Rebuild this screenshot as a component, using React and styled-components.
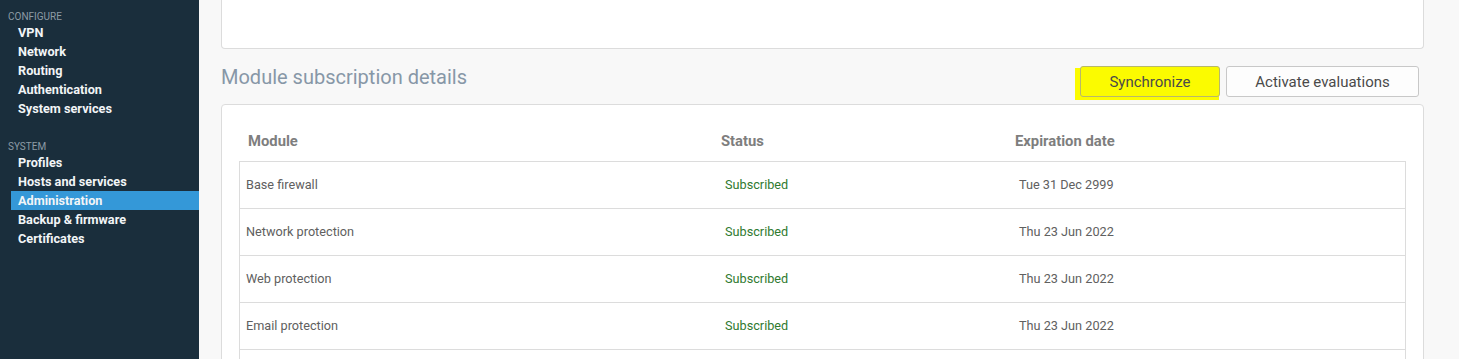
import React from "react";
import styled, { createGlobalStyle } from "styled-components";

const GlobalStyle = createGlobalStyle`
  html, body {
    margin: 0;
    padding: 0;
    height: 359px;
    overflow: hidden;
    background: #f8f8f8;
    font-family: Roboto, "Liberation Sans", Arial, sans-serif;
  }
  * { box-sizing: border-box; }
`;

const Layout = styled.div`
  display: flex;
  height: 359px;
  overflow: hidden;
`;

const Sidebar = styled.nav`
  width: 199px;
  flex-shrink: 0;
  background: #1a2e3c;
  padding-top: 11px;
`;

const SectionLabel = styled.div`
  font-size: 10px;
  line-height: 12px;
  color: #8d9ba5;
  text-transform: uppercase;
  padding-left: 8px;
  margin-top: ${(p) => (p.$first ? "0" : "23px")};
`;

const NavItem = styled.div`
  margin-left: 11px;
  padding-left: 7px;
  height: 19px;
  line-height: 19px;
  font-size: 12.7px;
  font-weight: 700;
  color: #f2f5f7;
  background: ${(p) => (p.$active ? "#3498d8" : "transparent")};
`;

const Main = styled.main`
  flex: 1;
  padding: 0 35px 0 22px;
  background: #f8f8f8;
`;

const TopPanel = styled.div`
  height: 49px;
  background: #fff;
  border: 1px solid #dcdcdc;
  border-top: none;
  border-radius: 0 0 4px 4px;
`;

const SectionHeader = styled.div`
  display: flex;
  align-items: flex-start;
  justify-content: space-between;
  height: 55px;
  padding-top: 17px;
`;

const Title = styled.h2`
  margin: 0;
  font-size: 20px;
  line-height: 22px;
  font-weight: 400;
  color: #8797a7;
`;

const Actions = styled.div`
  display: flex;
  gap: 6px;
  margin-right: 5px;
`;

const Highlight = styled.span`
  position: relative;
  display: inline-flex;
  &::before {
    content: "";
    position: absolute;
    left: -5px;
    right: 1px;
    top: 2px;
    bottom: -3px;
    background: #fbfb00;
  }
`;

const Button = styled.button`
  position: relative;
  height: 31px;
  width: ${(p) => p.$w}px;
  border: 1px solid ${(p) => (p.$marked ? "#b8b86a" : "#c8c8c8")};
  border-radius: 3px;
  background: ${(p) => (p.$marked ? "#fbfb00" : "#fdfdfd")};
  font-family: inherit;
  font-size: 15px;
  color: #4a4a4a;
  padding: 0;
  cursor: pointer;
`;

const Panel = styled.section`
  background: #fff;
  border: 1px solid #dcdcdc;
  border-radius: 4px;
  padding: 0 17px;
  height: 300px;
`;

const Grid = styled.div`
  display: grid;
  grid-template-columns: 479px 294px 1fr;
  align-items: center;
`;

const HeadRow = styled(Grid)`
  padding: 28px 0 11px;
`;

const HeadCell = styled.div`
  font-size: 14.8px;
  line-height: 17px;
  font-weight: 700;
  color: #7e7e7e;
  padding-left: ${(p) => p.$pad}px;
`;

const Body = styled.div`
  border: 1px solid #dcdcdc;
  border-bottom: none;
`;

const Row = styled(Grid)`
  height: 47px;
  padding-bottom: 1px;
  border-bottom: 1px solid #dcdcdc;
`;

const Cell = styled.div`
  font-size: 12.7px;
  color: ${(p) => (p.$ok ? "#2f7a30" : "#606060")};
  padding-left: 6px;
`;

const rows = [
  ["Base firewall", "Subscribed", "Tue 31 Dec 2999"],
  ["Network protection", "Subscribed", "Thu 23 Jun 2022"],
  ["Web protection", "Subscribed", "Thu 23 Jun 2022"],
  ["Email protection", "Subscribed", "Thu 23 Jun 2022"],
  ["", "", ""],
];

export default function App() {
  return (
    <>
      <GlobalStyle />
      <Layout>
        <Sidebar>
          <SectionLabel $first>Configure</SectionLabel>
          <NavItem>VPN</NavItem>
          <NavItem>Network</NavItem>
          <NavItem>Routing</NavItem>
          <NavItem>Authentication</NavItem>
          <NavItem>System services</NavItem>
          <SectionLabel>System</SectionLabel>
          <NavItem>Profiles</NavItem>
          <NavItem>Hosts and services</NavItem>
          <NavItem $active>Administration</NavItem>
          <NavItem>Backup &amp; firmware</NavItem>
          <NavItem>Certificates</NavItem>
        </Sidebar>
        <Main>
          <TopPanel />
          <SectionHeader>
            <Title>Module subscription details</Title>
            <Actions>
              <Highlight>
                <Button $marked $w={140}>Synchronize</Button>
              </Highlight>
              <Button $w={193}>Activate evaluations</Button>
            </Actions>
          </SectionHeader>
          <Panel>
            <HeadRow>
              <HeadCell $pad={9}>Module</HeadCell>
              <HeadCell $pad={3}>Status</HeadCell>
              <HeadCell $pad={3}>Expiration date</HeadCell>
            </HeadRow>
            <Body>
              {rows.map((r, i) => (
                <Row key={i}>
                  <Cell>{r[0]}</Cell>
                  <Cell $ok>{r[1]}</Cell>
                  <Cell>{r[2]}</Cell>
                </Row>
              ))}
            </Body>
          </Panel>
        </Main>
      </Layout>
    </>
  );
}
